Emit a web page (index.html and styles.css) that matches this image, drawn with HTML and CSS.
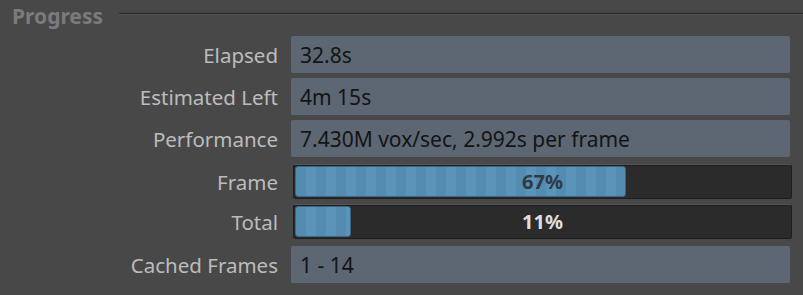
FILE: index.html
```html
<!DOCTYPE html>
<html>
<head>
<meta charset="utf-8">
<link rel="stylesheet" href="styles.css">
</head>
<body>
<div class="panel">
  <div class="header">
    <span class="title">Progress</span>
    <span class="rule"></span>
  </div>
  <div class="row r-field first">
    <div class="label">Elapsed</div>
    <div class="field">32.8s</div>
  </div>
  <div class="row r-field">
    <div class="label">Estimated Left</div>
    <div class="field">4m 15s</div>
  </div>
  <div class="row r-field">
    <div class="label">Performance</div>
    <div class="field">7.430M vox/sec, 2.992s per frame</div>
  </div>
  <div class="row r-bar gap7">
    <div class="label">Frame</div>
    <div class="bar">
      <div class="fill" style="width: 66.7%"></div>
      <div class="pct on-fill">67%</div>
    </div>
  </div>
  <div class="row r-bar">
    <div class="label">Total</div>
    <div class="bar">
      <div class="fill" style="width: 11.2%"></div>
      <div class="pct">11%</div>
    </div>
  </div>
  <div class="row r-field gap7">
    <div class="label">Cached Frames</div>
    <div class="field">1 - 14</div>
  </div>
</div>
</body>
</html>
```

FILE: styles.css
```css
html, body {
  margin: 0;
  padding: 0;
  background: #484848;
}
body {
  width: 803px;
  height: 295px;
  overflow: hidden;
  font-family: "Noto Sans", "Open Sans", sans-serif;
}
.panel {
  display: flex;
  flex-direction: column;
}
.header {
  display: flex;
  align-items: center;
  height: 36px;
  padding-left: 12px;
}
.title {
  font-weight: bold;
  font-size: 21px;
  color: #7b7b7b;
  line-height: 1;
  margin-top: -4px;
}
.rule {
  flex: 1;
  margin-left: 16px;
  margin-top: -9px;
  height: 1px;
  background: #262626;
  border-bottom: 1px solid #555555;
}
.row {
  display: flex;
  align-items: center;
  margin-top: 5px;
}
.row.first { margin-top: 0; }
.row.gap7 { margin-top: 7px; }
.r-field { height: 37px; }
.r-bar { height: 35px; }
.label {
  width: 278px;
  text-align: right;
  font-size: 20.5px;
  color: #bcbcbc;
  flex: none;
}
.field {
  margin-left: 13px;
  height: 37px;
  padding-left: 9px;
  box-sizing: border-box;
  width: 499px;
  background: #5c6773;
  border-radius: 2px;
  color: #141414;
  font-size: 21px;
  display: flex;
  align-items: center;
}
.bar {
  position: relative;
  margin-left: 15px;
  width: 499px;
  height: 35px;
  box-sizing: border-box;
  background: #2b2b2b;
  border: 1px solid #1e1e1e;
  border-top-color: #555555;
  border-radius: 3px;
  box-shadow: inset 0 1px 0 #1e1e1e;
}
.fill {
  position: absolute;
  left: 1px;
  top: 1px;
  bottom: 1px;
  border-radius: 3px;
  border: 1px solid #3d6583;
  box-sizing: border-box;
  background: repeating-linear-gradient(90deg, #538cb0 0 10px, #5a94b9 10px 20px);
}
.pct {
  position: absolute;
  inset: 0;
  display: flex;
  align-items: center;
  justify-content: center;
  font-weight: bold;
  font-size: 20px;
  color: #dedede;
}
.pct.on-fill { color: #2f3a44; }
```
